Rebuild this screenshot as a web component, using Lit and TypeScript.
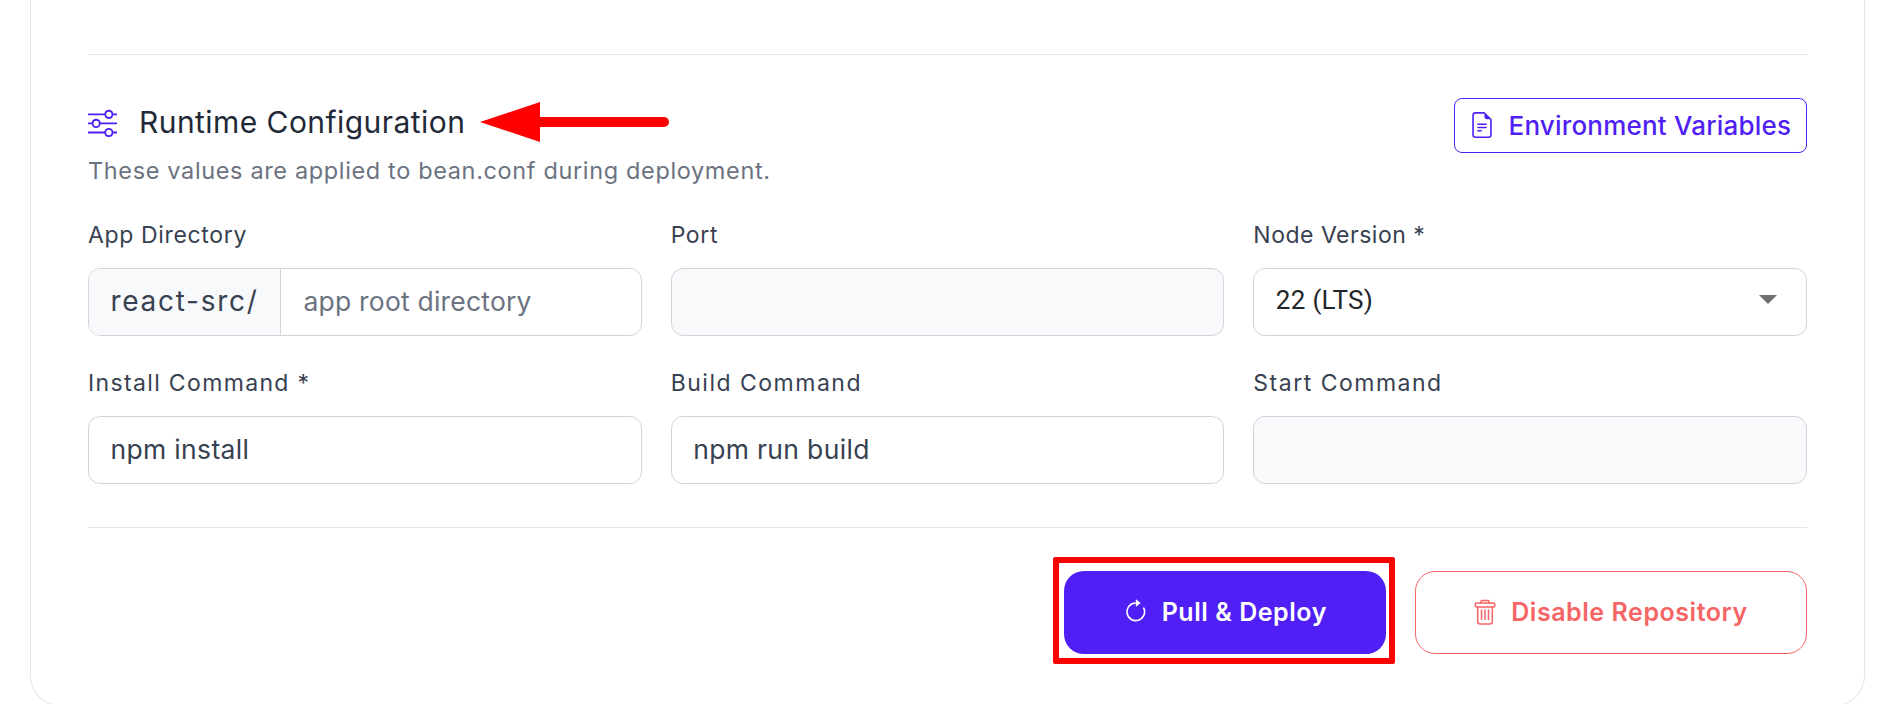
import { LitElement, html, css } from "lit";
import { customElement } from "lit/decorators.js";

const slidersIcon = html`<svg class="ic-sliders" viewBox="0 0 16 16" fill="currentColor"><path fill-rule="evenodd" d="M11.5 2a1.5 1.5 0 1 0 0 3 1.5 1.5 0 0 0 0-3M9.05 3a2.5 2.5 0 0 1 4.9 0H16v1h-2.05a2.5 2.5 0 0 1-4.9 0H0V3zM4.5 7a1.5 1.5 0 1 0 0 3 1.5 1.5 0 0 0 0-3M2.05 8a2.5 2.5 0 0 1 4.9 0H16v1H6.95a2.5 2.5 0 0 1-4.9 0H0V8zm9.45 4a1.5 1.5 0 1 0 0 3 1.5 1.5 0 0 0 0-3m-2.45 1a2.5 2.5 0 0 1 4.9 0H16v1h-2.05a2.5 2.5 0 0 1-4.9 0H0v-1z"/></svg>`;
const fileIcon = html`<svg class="ic-file" viewBox="0 0 16 16" fill="currentColor"><path d="M5.5 7a.5.5 0 0 0 0 1h5a.5.5 0 0 0 0-1zM5 9.5a.5.5 0 0 1 .5-.5h5a.5.5 0 0 1 0 1h-5a.5.5 0 0 1-.5-.5m0 2a.5.5 0 0 1 .5-.5h2a.5.5 0 0 1 0 1h-2a.5.5 0 0 1-.5-.5"/><path d="M9.5 0H4a2 2 0 0 0-2 2v12a2 2 0 0 0 2 2h8a2 2 0 0 0 2-2V4.5zm0 1v2A1.5 1.5 0 0 0 11 4.5h2V14a1 1 0 0 1-1 1H4a1 1 0 0 1-1-1V2a1 1 0 0 1 1-1z"/></svg>`;
const refreshIcon = html`<svg class="ic-refresh" viewBox="0 0 16 16" fill="currentColor"><path fill-rule="evenodd" d="M8 3a5 5 0 1 0 4.546 2.914.5.5 0 0 1 .908-.417A6 6 0 1 1 8 2z"/><path d="M8 4.466V.534a.25.25 0 0 1 .41-.192l2.36 1.966c.12.1.12.284 0 .384L8.41 4.658A.25.25 0 0 1 8 4.466"/></svg>`;
const trashIcon = html`<svg class="ic-trash" viewBox="0 0 22 26" fill="none" stroke="currentColor" stroke-width="1.5" stroke-linecap="round" stroke-linejoin="round"><rect x="1.3" y="4" width="19.4" height="4" rx="1"/><path d="M7 4V2.6a1 1 0 0 1 1-1h6a1 1 0 0 1 1 1V4"/><path d="M3.7 8v14.5A2.5 2.5 0 0 0 6.2 25h9.6a2.5 2.5 0 0 0 2.5-2.5V8"/><path d="M7.5 11v9.5M11 11v9.5M14.5 11v9.5"/></svg>`;

@customElement("app-root")
export class AppRoot extends LitElement {
  static styles = css`
    :host {
      display: block;
      height: 704px;
      overflow: hidden;
      background: #ffffff;
      font-family: Inter, "Liberation Sans", sans-serif;
      position: relative;
    }
    * { box-sizing: border-box; }
    .card {
      margin-left: 30px;
      width: 1835px;
      height: 706px;
      padding: 54px 57px 0;
      background: #fff;
      border: 1px solid #e5e7eb;
      border-top: none;
      border-radius: 0 0 30px 30px;
    }
    .rule { height: 1px; background: #e5e7eb; }
    .head {
      display: flex;
      justify-content: space-between;
      align-items: flex-start;
      margin-top: 43px;
    }
    .title-row { display: flex; align-items: center; gap: 22px; height: 48px; }
    .ic-sliders { width: 29px; height: 29px; color: #4f1ff5; flex: none; }
    h2 {
      margin: 0;
      font-size: 30px;
      letter-spacing: 0.44px;
      line-height: 48px;
      font-weight: 440;
      color: #1f2937;
    }
    .sub {
      margin: 9px 0 0;
      font-size: 23.5px;
      letter-spacing: 0.64px;
      line-height: 32px;
      color: #6b7280;
    }
    .env {
      display: flex;
      align-items: center;
      gap: 14px;
      width: 353px;
      height: 55px;
      padding-left: 13.5px;
      padding-bottom: 1px;
      border: 1.5px solid #4f1ff5;
      border-radius: 8px;
      color: #4f1ff5;
      font-size: 26px;
      letter-spacing: 0.2px;
      font-weight: 450;
    }
    .ic-file { width: 26px; height: 26px; flex: none; }
    .grid {
      display: grid;
      grid-template-columns: repeat(3, 1fr);
      column-gap: 29px;
      row-gap: 31.5px;
      margin-top: 33px;
    }
    label {
      display: block;
      font-size: 23px;
      letter-spacing: 0.65px;
      line-height: 30px;
      height: 30px;
      margin-bottom: 18px;
      font-weight: 400;
      color: #374151;
    }
    label.wide { letter-spacing: 1.5px; }
    label.mid { letter-spacing: 1.35px; }
    label.tight { letter-spacing: 0.5px; }
    .field {
      display: flex;
      align-items: center;
      height: 68px;
      border: 1.5px solid #d1d5db;
      border-radius: 12px;
      padding-left: 21.5px;
      padding-bottom: 2px;
      font-size: 26.5px;
      letter-spacing: 0.33px;
      color: #374151;
      background: #fff;
      overflow: hidden;
    }
    .field.off { background: #f8f9fb; }
    .field.group { padding-left: 0; padding-bottom: 0; }
    .prefix {
      display: flex;
      align-items: center;
      height: 100%;
      width: 192px;
      padding-left: 21.5px;
      padding-bottom: 2px;
      background: #f8f9fb;
      border-right: 1.5px solid #d1d5db;
      flex: none;
      font-size: 28px;
      letter-spacing: 1.72px;
    }
    .ph { padding: 0 0 2px 22.5px; color: #6b7280; letter-spacing: 0.2px; }
    .select {
      justify-content: space-between;
      padding-right: 29px;
      padding-bottom: 5px;
      color: #212529;
      font-family: Roboto, sans-serif;
      font-size: 26px;
      letter-spacing: 0.3px;
    }
    .caret {
      width: 0;
      height: 0;
      border-left: 9px solid transparent;
      border-right: 9px solid transparent;
      border-top: 9px solid #6f6f6f;
    }
    .rule.low { margin-top: 43px; }
    .actions {
      display: flex;
      justify-content: flex-end;
      gap: 29px;
      margin-top: 43px;
    }
    .btn {
      display: flex;
      align-items: center;
      justify-content: center;
      height: 83px;
      border-radius: 20px;
      font-size: 25px;
      letter-spacing: 0.55px;
      font-weight: 600;
    }
    .primary { width: 322px; background: #4f1ff5; color: #fff; gap: 13px; }
    .danger {
      width: 392px;
      border: 1.5px solid #f56565;
      color: #f56565;
      background: #fff;
      gap: 15px;
    }
    .ic-refresh { width: 25.6px; height: 25.6px; flex: none; }
    .ic-trash { width: 22px; height: 26px; flex: none; }
    .mark-box {
      position: absolute;
      left: 1053px;
      top: 557px;
      width: 342px;
      height: 107px;
      border: 6px solid #ff0000;
      border-radius: 2px;
    }
    .mark-arrow {
      position: absolute;
      left: 480px;
      top: 102px;
      width: 190px;
      height: 40px;
    }
  `;

  private field(text: string) {
    return html`<div class="field">${text}</div>`;
  }

  render() {
    return html`
      <div class="card">
        <div class="rule"></div>
        <div class="head">
          <div>
            <div class="title-row">${slidersIcon}<h2>Runtime Configuration</h2></div>
            <p class="sub">These values are applied to bean.conf during deployment.</p>
          </div>
          <div class="env">${fileIcon}<span>Environment Variables</span></div>
        </div>
        <div class="grid">
          <div>
            <label>App Directory</label>
            <div class="field group"><span class="prefix">react-src/</span><span class="ph">app root directory</span></div>
          </div>
          <div><label>Port</label><div class="field off"></div></div>
          <div>
            <label class="tight">Node Version *</label>
            <div class="field select"><span>22 (LTS)</span><span class="caret"></span></div>
          </div>
          <div><label class="mid">Install Command *</label>${this.field("npm install")}</div>
          <div><label class="wide">Build Command</label>${this.field("npm run build")}</div>
          <div><label class="wide">Start Command</label><div class="field off"></div></div>
        </div>
        <div class="rule low"></div>
        <div class="actions">
          <div class="btn primary">${refreshIcon}<span>Pull &amp; Deploy</span></div>
          <div class="btn danger">${trashIcon}<span>Disable Repository</span></div>
        </div>
      </div>
      <svg class="mark-arrow" viewBox="0 0 190 40"><path d="M0 20 L60 0 V15 H184 a5 5 0 0 1 0 10 H60 V40 Z" fill="#ff0000"/></svg>
      <div class="mark-box"></div>
    `;
  }
}
